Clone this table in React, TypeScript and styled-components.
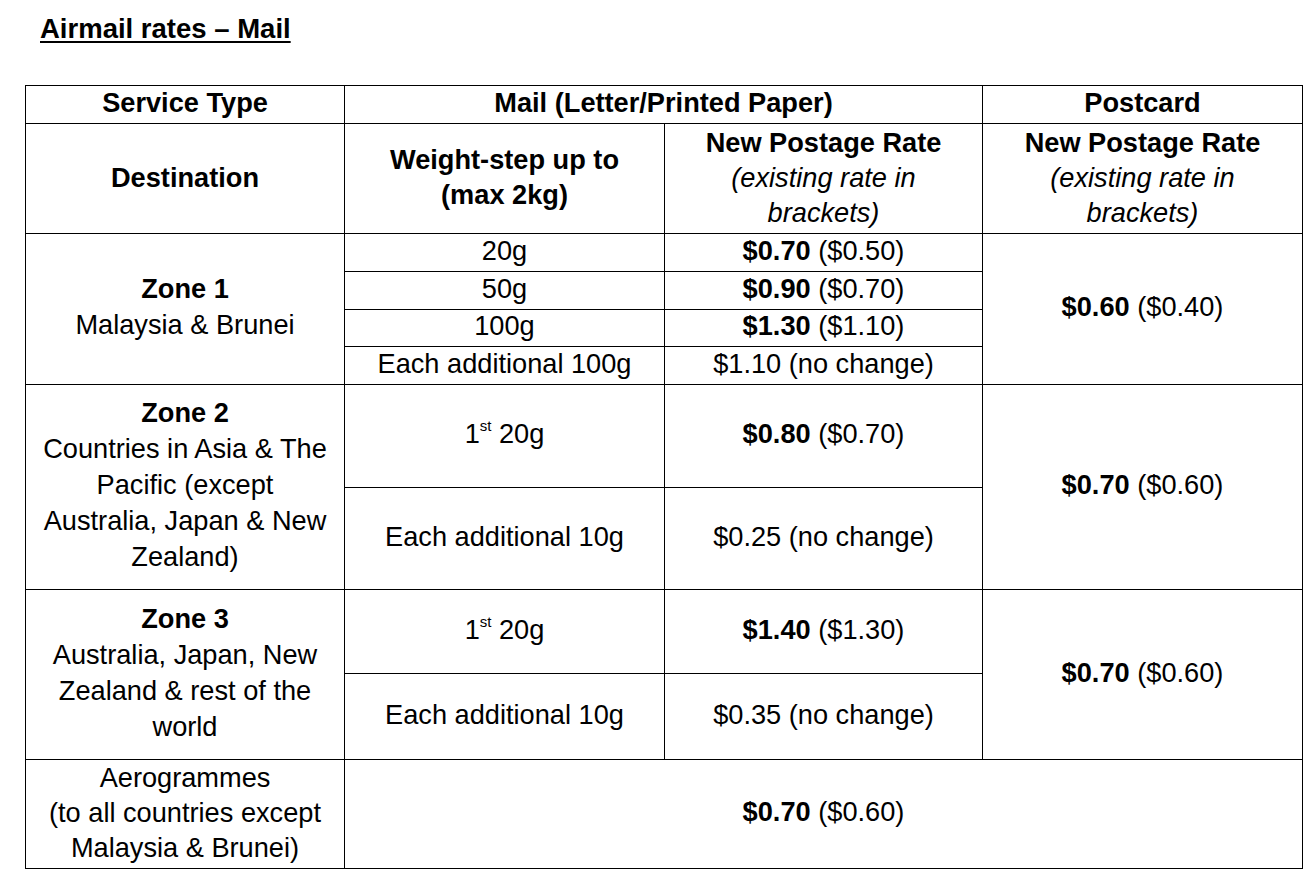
import styled, { createGlobalStyle } from 'styled-components';

const GlobalStyle = createGlobalStyle`
    html, body {
        margin: 0;
        padding: 0;
        background: #fff;
    }

    body {
        font-family: "Liberation Sans", Arial, sans-serif;
        color: #000;
    }
`;

const Page = styled.div`
    padding: 11px 0 0 25px;
`;

const Title = styled.h1`
    margin: 0 0 38px 15px;
    font-size: 27.5px;
    line-height: 36px;
    font-weight: bold;
    text-decoration: underline;
    text-decoration-thickness: 2px;
    text-underline-offset: 3px;
`;

const Table = styled.table`
    width: 1277px;
    table-layout: fixed;
    border-collapse: collapse;
    font-size: 27.2px;
    line-height: 36px;
`;

const Row = styled.tr<{ $h: number }>`
    height: ${({ $h }) => $h}px;
`;

const Cell = styled.td<{ $bold?: boolean }>`
    padding: 0 6px 4px;
    border: 1.5px solid #000;
    text-align: center;
    vertical-align: middle;
    font-weight: ${({ $bold }) => ($bold ? 'bold' : 'normal')};
`;

/* single-line cells in the short rows */
const LineCell = styled(Cell)`
    line-height: 30px;
`;

/* three-line cells that fill their row */
const FullCell = styled(Cell)`
    padding-bottom: 3px;
    line-height: 35px;
`;

const Strong = styled.b`
    font-weight: bold;
`;

const Note = styled.i`
    font-style: italic;
    font-weight: normal;
`;

const Sup = styled.sup`
    font-size: 15px;
    line-height: 0;
    vertical-align: 12px;
`;

const Rate = ({ now, was }: { now: string; was: string }) => (
    <>
        <Strong>{now}</Strong> ({was})
    </>
);

const App = () => (
    <>
        <GlobalStyle />
        <Page>
            <Title>Airmail rates – Mail</Title>
            <Table>
                <colgroup>
                    <col style={{ width: 319 }} />
                    <col style={{ width: 320 }} />
                    <col style={{ width: 318 }} />
                    <col style={{ width: 320 }} />
                </colgroup>
                <tbody>
                    <Row $h={38}>
                        <LineCell $bold>Service Type</LineCell>
                        <LineCell $bold colSpan={2}>
                            Mail (Letter/Printed Paper)
                        </LineCell>
                        <LineCell $bold>Postcard</LineCell>
                    </Row>
                    <Row $h={110}>
                        <FullCell $bold>Destination</FullCell>
                        <FullCell $bold>
                            Weight-step up to
                            <br />
                            (max 2kg)
                        </FullCell>
                        <FullCell $bold>
                            New Postage Rate
                            <br />
                            <Note>
                                (existing rate in
                                <br />
                                brackets)
                            </Note>
                        </FullCell>
                        <FullCell $bold>
                            New Postage Rate
                            <br />
                            <Note>
                                (existing rate in
                                <br />
                                brackets)
                            </Note>
                        </FullCell>
                    </Row>

                    <Row $h={38}>
                        <Cell rowSpan={4}>
                            <Strong>Zone 1</Strong>
                            <br />
                            Malaysia &amp; Brunei
                        </Cell>
                        <LineCell>20g</LineCell>
                        <LineCell>
                            <Rate now="$0.70" was="$0.50" />
                        </LineCell>
                        <Cell rowSpan={4}>
                            <Rate now="$0.60" was="$0.40" />
                        </Cell>
                    </Row>
                    <Row $h={38}>
                        <LineCell>50g</LineCell>
                        <LineCell>
                            <Rate now="$0.90" was="$0.70" />
                        </LineCell>
                    </Row>
                    <Row $h={37}>
                        <LineCell>100g</LineCell>
                        <LineCell>
                            <Rate now="$1.30" was="$1.10" />
                        </LineCell>
                    </Row>
                    <Row $h={38}>
                        <LineCell>Each additional 100g</LineCell>
                        <LineCell>$1.10 (no change)</LineCell>
                    </Row>

                    <Row $h={103}>
                        <Cell rowSpan={2}>
                            <Strong>Zone 2</Strong>
                            <br />
                            Countries in Asia &amp; The
                            <br />
                            Pacific (except
                            <br />
                            Australia, Japan &amp; New
                            <br />
                            Zealand)
                        </Cell>
                        <Cell>
                            1<Sup>st</Sup> 20g
                        </Cell>
                        <Cell>
                            <Rate now="$0.80" was="$0.70" />
                        </Cell>
                        <Cell rowSpan={2}>
                            <Rate now="$0.70" was="$0.60" />
                        </Cell>
                    </Row>
                    <Row $h={102}>
                        <Cell>Each additional 10g</Cell>
                        <Cell>$0.25 (no change)</Cell>
                    </Row>

                    <Row $h={84}>
                        <Cell rowSpan={2}>
                            <Strong>Zone 3</Strong>
                            <br />
                            Australia, Japan, New
                            <br />
                            Zealand &amp; rest of the
                            <br />
                            world
                        </Cell>
                        <Cell>
                            1<Sup>st</Sup> 20g
                        </Cell>
                        <Cell>
                            <Rate now="$1.40" was="$1.30" />
                        </Cell>
                        <Cell rowSpan={2}>
                            <Rate now="$0.70" was="$0.60" />
                        </Cell>
                    </Row>
                    <Row $h={86}>
                        <Cell>Each additional 10g</Cell>
                        <Cell>$0.35 (no change)</Cell>
                    </Row>

                    <Row $h={109}>
                        <FullCell>
                            Aerogrammes
                            <br />
                            (to all countries except
                            <br />
                            Malaysia &amp; Brunei)
                        </FullCell>
                        <Cell colSpan={3}>
                            <Rate now="$0.70" was="$0.60" />
                        </Cell>
                    </Row>
                </tbody>
            </Table>
        </Page>
    </>
);

export default App;
